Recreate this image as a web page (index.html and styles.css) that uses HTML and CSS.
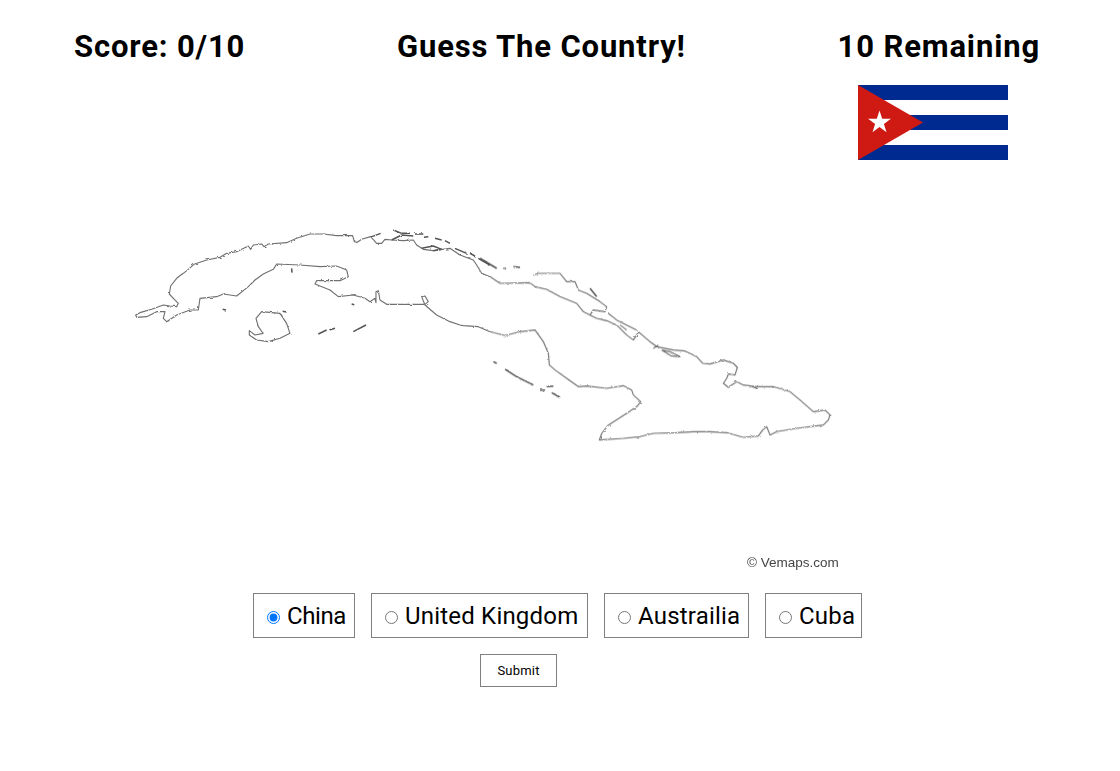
FILE: index.html
```html
<!doctype html>
<html>
<head>
<meta charset="utf-8">
<title>Guess The Country!</title>
<link rel="stylesheet" href="styles.css">
</head>

<body>
<div class="top">
	<h2>Score: 0/10</h2>
	<h2>Guess The Country!</h2>
	<h2>10 Remaining</h2>
</div>
<div class="flagRow">
	<svg class="flag" width="150" height="75" viewBox="0 0 150 75">
		<rect width="150" height="75" fill="#fff"/>
		<rect width="150" height="15" fill="#002a8f"/>
		<rect y="30" width="150" height="15" fill="#002a8f"/>
		<rect y="60" width="150" height="15" fill="#002a8f"/>
		<polygon points="0,0 65,37.5 0,75" fill="#cf1a14"/>
		<polygon points="21.5,25.5 24.2,33.8 32.9,33.8 25.9,38.9 28.55,47.2 21.5,42.1 14.45,47.2 17.1,38.9 10.1,33.8 18.8,33.8" fill="#fff"/>
	</svg>
</div>
<svg class="map" width="740" height="425" viewBox="0 0 740 425">
	<defs>
		<filter id="rough" x="-5%" y="-5%" width="110%" height="110%">
			<feTurbulence type="fractalNoise" baseFrequency="0.3" numOctaves="2" seed="4"/>
			<feDisplacementMap in="SourceGraphic" scale="2.5"/>
		</filter>
		<filter id="soft">
			<feGaussianBlur stdDeviation="0.35"/>
		</filter>
	</defs>
	<g filter="url(#rough)">
		<g class="west" transform="translate(0 50) scale(0.3333)">
			<path d="M1110 200L1085 190L1070 165L1060 150L1020 135L990 115L940 122L910 118L890 105L880 90L850 92L815 90L795 88L785 100L770 100L752 80L725 88L712 97L703 95L698 77L650 77L610 72L570 72L530 85L500 98L445 102L432 110L425 102L400 105L392 118L385 108L350 125L320 130L300 142L260 150L222 163L205 178L190 190L170 205L152 228L148 252L160 265L175 280L170 290L150 288L130 285L95 298L70 305L60 308L47 315L50 322L80 320L110 305L135 305L130 325L140 335L170 315L210 300L235 300L240 265L290 260L310 252L350 258L385 230L405 210L430 192L460 178L470 162L540 165L600 170L650 168L680 180L685 200L660 212L590 212L585 222L630 240L655 260L700 255L735 265L750 275L765 265L768 278L768 245L775 242L780 270L800 283L850 283L915 283L925 275L915 258L905 260L915 285L950 315L990 335L1020 345L1030 347L1075 350L1110 365"/>
			<path d="M430 370L415 350L408 325L425 305L480 310L500 340L510 370L480 385L445 395L410 390L388 375L388 362L405 375L430 370"/>
			<path class="cays" d="M595 372L620 360M628 360L645 355M700 365L738 345M308 298L318 300M695 282L703 284M515 175L516 188M488 304L500 306"/>
			<path class="cays" d="M820 60L845 70L870 70M815 90L845 75L880 78M885 72L910 72M912 82L925 80M945 85L965 90M975 92L990 100M750 82L782 70M905 115L940 108L965 118L940 122M1005 115L1040 130M1050 130L1065 138M1075 145L1110 165"/>
		</g>
		<g class="east" transform="translate(360 90) scale(0.3333)">
			<path d="M30 80L60 100L150 98L165 110L200 118L240 140L290 160L310 185L330 195L350 205L380 212L410 225L440 255L460 270L470 255L475 245L510 275L530 290L580 300L615 303L650 320L668 340L690 342L730 330L760 340L772 352L765 375L745 372L740 385L730 400L745 412L770 395L790 405L830 410L880 410L930 425L960 450L1000 485L1035 480L1050 495L1045 510L1030 525L950 535L890 545L870 555L860 530L848 540L835 558L790 562L740 548L690 545L640 545L590 548L520 550L480 560L430 565L358 570L365 550L385 525L440 490L470 470L482 455L460 435L455 420L430 407L380 415L320 408L295 410L260 385L225 360L208 345L205 310L190 275L165 240L120 245L75 257L30 245"/>
			<path d="M160 75L175 70L240 70L260 95L285 95L295 120L320 130L360 155L380 170L375 185L340 180L330 195M385 190L410 210L470 240M420 225L440 240M520 295L535 285M545 300L570 305L600 320L575 318L545 300M815 410L830 415"/>
			<path class="cays" d="M0 25L50 55M70 55L78 56M100 50L120 52M330 115L350 140M40 335L50 340M75 358L110 380L160 405M180 420L195 420M200 410L220 408M215 428L240 442"/>
		</g>
	</g>
	<text class="credit" x="627" y="407" filter="url(#soft)">© Vemaps.com</text>
</svg>
<form>
	<div class="options">
		<label class="first"><input type="radio" name="country" checked>China</label>
		<label><input type="radio" name="country">United Kingdom</label>
		<label><input type="radio" name="country">Austrailia</label>
		<label><input type="radio" name="country">Cuba</label>
	</div>
	<div class="send">
		<button type="button">Submit</button>
	</div>
</form>
</body>
</html>
```
FILE: styles.css
```css
*{margin:0; padding:0; box-sizing:border-box;}
body{font-family:"Roboto","Noto Sans",sans-serif; color:#000; background:#fff;}
.top{display:flex; justify-content:space-between; padding:29px 80px 0 74px; height:85px;}
.top h2{font-size:31px; font-weight:700; line-height:36px; letter-spacing:0.85px;}
.flagRow{display:flex; justify-content:flex-end; padding-right:112px;}
.flag{display:block;}
.map{display:block; margin-left:120px;}
.map path{fill:none; stroke:#707070; stroke-width:3.4; stroke-linejoin:round;}
.map .cays{stroke:#555; stroke-width:4.5;}
.credit{font-family:"Liberation Sans",sans-serif; font-size:13.5px; fill:#444;}
.options{display:grid; grid-template-columns:102px 217px 145px 97px; gap:16px; margin-top:8px; padding-left:253px;}
.options label{display:flex; align-items:center; height:45px; padding-left:13px; border:1px solid #808080; font-size:24px; letter-spacing:0.2px;}
.options .first{letter-spacing:-0.4px;}
.options input{width:13px; height:13px; margin:4px 7px 0 0;}
.send{padding:16px 0 0 480px;}
.send button{display:block; width:77px; height:33px; background:#fff; border:1px solid #808080; font-family:inherit; font-size:13px; letter-spacing:0.2px; color:#000;}
```
